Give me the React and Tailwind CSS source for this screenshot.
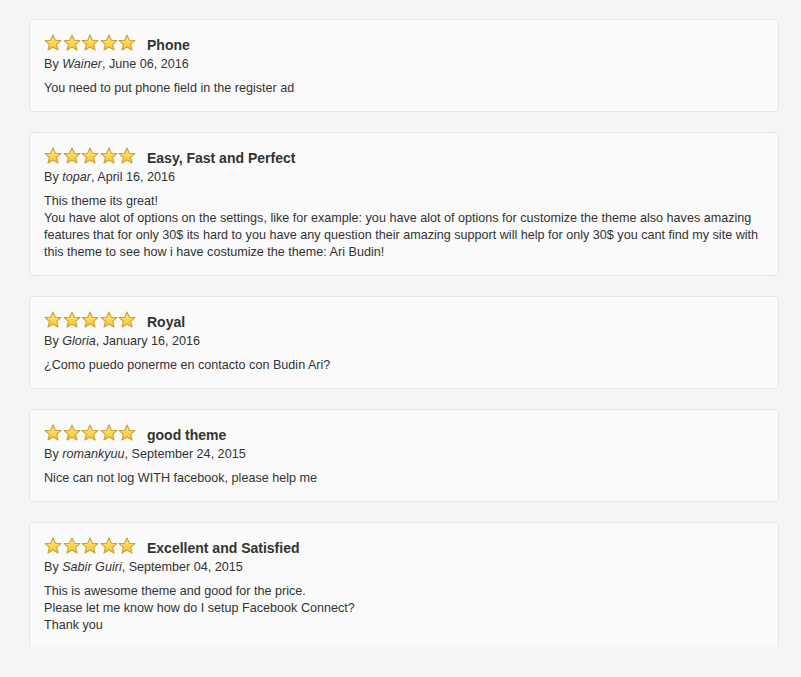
import React from "react";

const reviews = [
  {
    title: "Phone",
    author: "Wainer",
    date: "June 06, 2016",
    lines: ["You need to put phone field in the register ad"],
  },
  {
    title: "Easy, Fast and Perfect",
    author: "topar",
    date: "April 16, 2016",
    lines: [
      "This theme its great!",
      "You have alot of options on the settings, like for example: you have alot of options for customize the theme also haves amazing features that for only 30$ its hard to you have any question their amazing support will help for only 30$ you cant find my site with this theme to see how i have costumize the theme: Ari Budin!",
    ],
  },
  {
    title: "Royal",
    author: "Gloria",
    date: "January 16, 2016",
    lines: ["¿Como puedo ponerme en contacto con Budin Ari?"],
  },
  {
    title: "good theme",
    author: "romankyuu",
    date: "September 24, 2015",
    lines: ["Nice can not log WITH facebook, please help me"],
  },
  {
    title: "Excellent and Satisfied",
    author: "Sabir Guiri",
    date: "September 04, 2015",
    lines: [
      "This is awesome theme and good for the price.",
      "Please let me know how do I setup Facebook Connect?",
      "Thank you",
    ],
  },
];

const Star = () => (
  <svg width="18" height="18" viewBox="0 0 20 20" className="block">
    <defs>
      <linearGradient id="starFill" x1="0" y1="0" x2="0" y2="1">
        <stop offset="0" stopColor="#ffe98a" />
        <stop offset="1" stopColor="#f8c520" />
      </linearGradient>
    </defs>
    <polygon
      points="10,1.2 12.6,7 18.8,7.4 14,11.5 15.6,17.8 10,14.4 4.4,17.8 6,11.5 1.2,7.4 7.4,7"
      fill="url(#starFill)"
      stroke="#c9a03c"
      strokeWidth="1.2"
      strokeLinejoin="round"
    />
  </svg>
);

const ReviewCard = ({ review }) => (
  <div className="bg-[#fafafa] border border-[#e3e6ea] rounded-[4px] px-[14px] pt-[14px] pb-[14px]">
    <div className="flex items-center h-[18px]">
      <div className="flex gap-[0.5px]">
        {[0, 1, 2, 3, 4].map((i) => (
          <Star key={i} />
        ))}
      </div>
      <span className="ml-[11px] text-[14px] font-bold text-[#333] leading-[18px] mt-[4px]">
        {review.title}
      </span>
    </div>
    <div className="text-[12.6px] leading-[17px] text-[#333] mt-[4px]">
      By <em>{review.author}</em>, {review.date}
    </div>
    <div className="text-[12.6px] leading-[17px] text-[#333] mt-[7px]">
      {review.lines.map((l, i) => (
        <div key={i}>{l}</div>
      ))}
    </div>
  </div>
);

export default function App() {
  return (
    <div className="w-[801px] h-[677px] bg-[#f5f5f5] font-['Liberation_Sans',Arial,sans-serif]">
      <div className="h-[647px] overflow-hidden pt-[19px] pl-[29px] pr-[22px]">
        <div className="flex flex-col gap-[20px]">
          {reviews.map((r, i) => (
            <ReviewCard key={i} review={r} />
          ))}
        </div>
      </div>
    </div>
  );
}
